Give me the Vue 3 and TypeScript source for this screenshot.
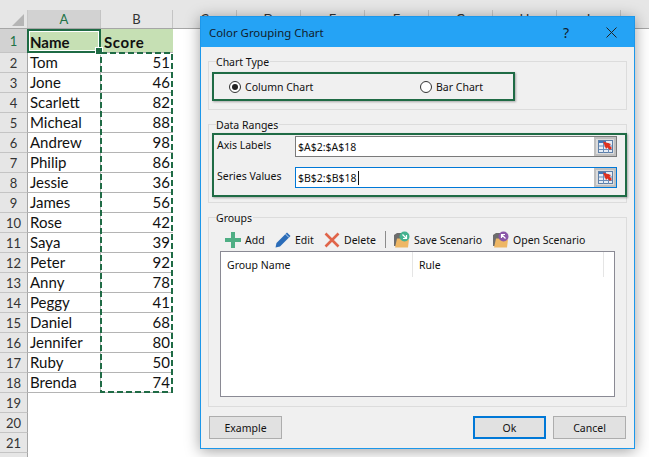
<script setup lang="ts">
const people: [string, number][] = [
  ['Tom', 51], ['Jone', 46], ['Scarlett', 82], ['Micheal', 88], ['Andrew', 98], ['Philip', 86],
  ['Jessie', 36], ['James', 56], ['Rose', 42], ['Saya', 39], ['Peter', 92], ['Anny', 78],
  ['Peggy', 41], ['Daniel', 68], ['Jennifer', 80], ['Ruby', 50], ['Brenda', 74],
]
const otherCols = ['C', 'D', 'E', 'F', 'G', 'H', 'I']
const emptyRows = [19, 20, 21]
</script>

<template>
  <div class="screen">
    <div class="sheet">
      <div class="head-row">
        <div class="corner"><span class="tri"></span></div>
        <div class="col-head active col-a">A</div>
        <div class="col-head col-b">B</div>
        <div class="col-head" v-for="c in otherCols" :key="c">{{ c }}</div>
      </div>
      <div class="row first">
        <div class="num active">1</div>
        <div class="cell hl bold a">Name</div>
        <div class="cell hl bold b-l">Score</div>
      </div>
      <div class="row" v-for="(p, i) in people" :key="p[0]">
        <div class="num">{{ i + 2 }}</div>
        <div class="cell a">{{ p[0] }}</div>
        <div class="cell b">{{ p[1] }}</div>
      </div>
      <div class="row" v-for="n in emptyRows" :key="n">
        <div class="num">{{ n }}</div>
      </div>
      <div class="row"><div class="num"></div></div>
    </div>

    <div class="sel"><span class="handle"></span></div>
    <svg class="ants" width="74" height="342" viewBox="0 0 74 342">
      <rect x="1" y="1" width="71" height="339" fill="none" stroke="#1f6b45" stroke-width="2" stroke-dasharray="6 3" />
    </svg>

    <div class="dialog">
      <div class="title">
        <span class="title-text">Color Grouping Chart</span>
        <span class="help">?</span>
        <svg class="close" width="11" height="11" viewBox="0 0 11 11"><path d="M.5.5l10 10M10.500.5l-10 10" stroke="#222" stroke-width="1" fill="none" /></svg>
      </div>
      <div class="body">
        <section class="group g1">
          <span class="legend">Chart Type</span>
          <div class="green radios">
            <label class="radio r1"><span class="dot on"></span>Column Chart</label>
            <label class="radio"><span class="dot"></span>Bar Chart</label>
          </div>
        </section>

        <section class="group g2">
          <span class="legend">Data Ranges</span>
          <div class="green ranges">
            <div class="range">
              <span class="range-label">Axis Labels</span>
              <div class="input">
                <span class="val">$A$2:$A$18</span>
                <span class="pick">
                  <svg width="15" height="13" viewBox="0 0 15 13"><rect x=".5" y=".5" width="14" height="12" fill="#e6edf6" stroke="#5d7fa8" /><path d="M1 1h7v2H1z" fill="#3f78bb" /><path d="M1 6h13M1 9.500h13M5.500 3v10M10.500 3v10" stroke="#6b8db8" fill="none" /><path d="M5 1.500l8 2.500-1.500 1.500 2.500 2.500-2 2-2.500-2.500L8 9z" fill="#e0301e" /></svg>
                </span>
              </div>
            </div>
            <div class="range">
              <span class="range-label">Series Values</span>
              <div class="input focus">
                <span class="val">$B$2:$B$18</span><span class="caret"></span>
                <span class="pick">
                  <svg width="15" height="13" viewBox="0 0 15 13"><rect x=".5" y=".5" width="14" height="12" fill="#e6edf6" stroke="#5d7fa8" /><path d="M1 1h7v2H1z" fill="#3f78bb" /><path d="M1 6h13M1 9.500h13M5.500 3v10M10.500 3v10" stroke="#6b8db8" fill="none" /><path d="M5 1.500l8 2.500-1.500 1.500 2.500 2.500-2 2-2.500-2.500L8 9z" fill="#e0301e" /></svg>
                </span>
              </div>
            </div>
          </div>
        </section>

        <section class="group g3">
          <span class="legend">Groups</span>
          <div class="toolbar">
            <div class="tool t-add">
              <svg width="16" height="16" viewBox="0 0 16 16"><path d="M6 0h4v6h6v4h-6v6H6v-6H0V6h6z" fill="#4fae84" /></svg>
              <span>Add</span>
            </div>
            <div class="tool t-edit">
              <svg width="16" height="16" viewBox="0 0 16 16"><path d="M12 .5l3.500 3.500L5 14.500 .5 15.500 1.500 11z" fill="#2b6cb8" /><path d="M10.500 2l3.500 3.500" stroke="#bcd3ec" stroke-width="1" /></svg>
              <span>Edit</span>
            </div>
            <div class="tool t-del">
              <svg width="16" height="16" viewBox="0 0 16 16"><path d="M1.500 1.500l13 13M14.500 1.500l-13 13" stroke="#e0654a" stroke-width="2.600" fill="none" /></svg>
              <span>Delete</span>
            </div>
            <span class="sep"></span>
            <div class="tool t-save">
              <svg width="17" height="17" viewBox="0 0 17 17"><path d="M0 4l3-2h4v13H0z" fill="#6d6d6d" /><path d="M1 16.500l2-9h4l1 1h7l-1 8z" fill="#eeb765" /><circle cx="10.500" cy="5.500" r="5" fill="#45b28f" /><path d="M8.500 3.500l3.500 3.500M12.500 4v3.500H9" stroke="#fff" stroke-width="1.200" fill="none" /></svg>
              <span>Save Scenario</span>
            </div>
            <div class="tool">
              <svg width="17" height="17" viewBox="0 0 17 17"><path d="M0 4l3-2h4v13H0z" fill="#6d6d6d" /><path d="M1 16.500l2-9h4l1 1h7l-1 8z" fill="#eeb765" /><circle cx="10.500" cy="5.500" r="5" fill="#8a57a8" /><path d="M12.500 7.500L9 4M8.500 7V3.500H12" stroke="#fff" stroke-width="1.200" fill="none" /></svg>
              <span>Open Scenario</span>
            </div>
          </div>
          <div class="list">
            <div class="list-head">
              <span class="lh">Group Name</span>
              <span class="lh lh-rule">Rule</span>
            </div>
          </div>
        </section>

        <div class="footer">
          <button class="btn">Example</button>
          <span class="spacer"></span>
          <button class="btn primary">Ok</button>
          <button class="btn">Cancel</button>
        </div>
      </div>
    </div>
  </div>
</template>

<style>
html, body { margin: 0; padding: 0; background: #fff; }
</style>

<style scoped>
.screen {
  position: relative;
  width: 649px;
  height: 457px;
  overflow: hidden;
  background: #fff;
  font-family: "Noto Sans", sans-serif;
  color: #111;
}
.sheet {
  display: flex;
  flex-direction: column;
  font-family: Lato, "Liberation Sans", sans-serif;
}
.head-row {
  display: flex;
  height: 29px;
  padding-top: 10px;
  box-sizing: border-box;
  background: #e6e6e6;
  border-bottom: 1px solid #a6a6a6;
}
.corner {
  position: relative;
  width: 28px;
  flex: none;
  box-sizing: border-box;
  border-right: 1px solid #c8c8c8;
}
.tri {
  display: block;
  position: absolute;
  right: 3px;
  bottom: 2px;
  width: 0;
  height: 0;
  border-left: 12px solid transparent;
  border-bottom: 12px solid #b5b5b5;
}
.col-head {
  width: 64px;
  flex: none;
  box-sizing: border-box;
  border-right: 1px solid #c4c4c4;
  text-align: center;
  font-size: 13px;
  line-height: 19px;
  color: #333;
}
.col-head.col-a { width: 73px; }
.col-head.col-b { width: 72px; }
.col-head.active { background: #d2d2d2; color: #217346; }
.row { display: flex; height: 20px; }
.row.first { height: 24px; }
.num {
  width: 28px;
  flex: none;
  box-sizing: border-box;
  background: #e6e6e6;
  border-right: 1px solid #a6a6a6;
  border-bottom: 1px solid #c4c4c4;
  text-align: center;
  font-size: 13px;
  line-height: 20px;
  color: #333;
}
.first .num { line-height: 24px; }
.num.active { background: #d2d2d2; color: #217346; }
.cell {
  box-sizing: border-box;
  border-bottom: 1px solid #b4b4b4;
  font-size: 15px;
  line-height: 19px;
  color: #111;
  white-space: nowrap;
}
.cell.a { width: 73px; padding-left: 2px; border-right: 1px solid #b4b4b4; }
.cell.b { width: 72px; padding-right: 3px; text-align: right; }
.cell.b-l { width: 72px; padding-left: 3px; letter-spacing: 0.6px; }
.cell.hl { background: #c6e0b4; line-height: 26px; }
.cell.bold { font-weight: 700; }
.sel {
  position: absolute;
  left: 27px;
  top: 29px;
  width: 74px;
  height: 24px;
  box-sizing: border-box;
  border: 2px solid #1f6b45;
  box-shadow: inset 0 0 0 1px #fff;
}
.handle {
  position: absolute;
  right: -4px;
  bottom: -4px;
  width: 6px;
  height: 6px;
  background: #1f6b45;
  border: 1px solid #fff;
}
.ants { position: absolute; left: 100px; top: 52px; }

.dialog {
  position: absolute;
  left: 200px;
  top: 16px;
  width: 435px;
  height: 433px;
  box-sizing: border-box;
  border: 1px solid #1c97ea;
  background: #f0f0f0;
  box-shadow: 0 2px 14px rgba(0, 0, 0, 0.38);
  display: flex;
  flex-direction: column;
  font-size: 10.5px;
}
.title {
  height: 30px;
  flex: none;
  background: #25a3f5;
  display: flex;
  align-items: center;
  padding-left: 8px;
  color: #10202c;
}
.title-text { font-size: 11.4px; flex: 1; }
.help { font-size: 14px; margin-right: 37px; }
.close { margin-right: 17px; }
.body {
  flex: 1;
  display: flex;
  flex-direction: column;
  padding: 14px 7px 0;
  gap: 14px;
}
.group {
  border: 1px solid #dcdcdc;
  box-sizing: border-box;
  display: flex;
  flex-direction: column;
  align-items: flex-start;
  flex: none;
}
.legend {
  margin: -7px 0 0 7px;
  line-height: 14px;
  background: #f0f0f0;
  padding: 0 1px 0 0;
}
.g1 { height: 49px; }
.g2 { height: 79px; }
.g3 { height: 190px; }
.green {
  box-sizing: border-box;
  border: 2px solid #1f6b45;
  box-shadow: 1px 1px 2px rgba(0, 0, 0, 0.3);
  flex: none;
}
.radios {
  margin: 3px 0 0 3px;
  width: 303px;
  height: 29px;
  display: flex;
  align-items: center;
  padding-left: 15px;
}
.radio { display: flex; align-items: center; gap: 4px; }
.r1 { width: 191px; }
.dot {
  width: 12px;
  height: 12px;
  box-sizing: border-box;
  border-radius: 50%;
  border: 1px solid #333;
  background: #fff;
  display: flex;
  align-items: center;
  justify-content: center;
}
.dot.on::after {
  content: "";
  width: 6px;
  height: 6px;
  border-radius: 50%;
  background: #222;
}
.ranges {
  margin: 1px -1px 0 3px;
  width: 415px;
  height: 64px;
  padding: 1px 8px 0 3px;
  display: flex;
  flex-direction: column;
  gap: 10px;
}
.range { display: flex; align-items: center; }
.range-label { width: 78px; flex: none; margin-top: -3px; }
.input {
  flex: 1;
  height: 21px;
  box-sizing: border-box;
  border: 1px solid #7a7a7a;
  background: #fff;
  display: flex;
  align-items: center;
  padding-left: 2px;
}
.input.focus { border-color: #0078d7; }
.val { white-space: nowrap; }
.caret { width: 1px; height: 14px; background: #111; margin-left: 1px; }
.pick {
  margin-left: auto;
  width: 22px;
  height: 19px;
  box-sizing: border-box;
  border: 2px solid #c0c0c0;
  background: #dcdcdc;
  display: flex;
  align-items: center;
  justify-content: center;
}
.toolbar {
  display: flex;
  align-items: center;
  height: 17px;
  margin: 6px 0 0 16px;
}
.tool { display: flex; align-items: center; gap: 4px; flex: none; white-space: nowrap; }
.t-add { width: 50px; }
.t-edit { width: 49px; }
.t-del { width: 61px; }
.t-save { width: 99px; gap: 3px; }
.tool:last-child { gap: 3px; }
.sep { width: 1px; height: 17px; background: #8c8c8c; margin-right: 8px; flex: none; }
.list {
  margin: 3px 0 0 11px;
  width: 395px;
  height: 146px;
  box-sizing: border-box;
  border: 1px solid #8a8a94;
  background: #fff;
}
.list-head { display: flex; height: 25px; }
.lh {
  width: 192px;
  box-sizing: border-box;
  padding-left: 6px;
  border-right: 1px solid #e5e5e5;
  line-height: 27px;
}
.lh-rule { width: 191px; }
.footer {
  display: flex;
  gap: 7px;
  margin-top: -5px;
  padding: 0 1px;
}
.spacer { flex: 1; }
.btn {
  width: 73px;
  height: 23px;
  box-sizing: border-box;
  border: 1px solid #adadad;
  background: #e1e1e1;
  font: inherit;
  color: #111;
  padding: 0;
}
.btn.primary { border: 2px solid #0078d7; }
</style>
